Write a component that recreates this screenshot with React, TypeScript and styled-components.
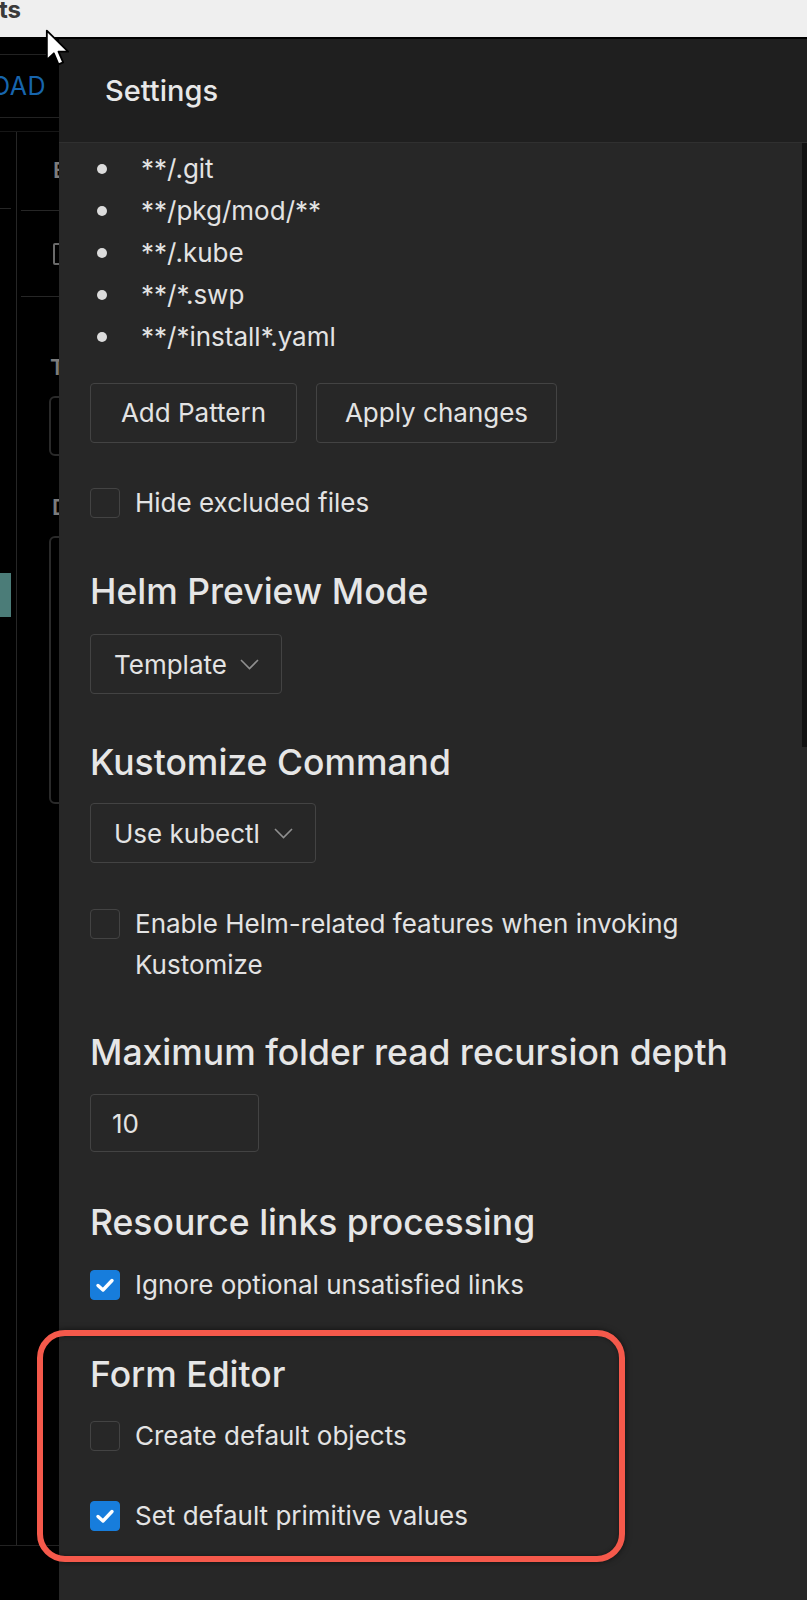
import React from 'react';
import styled, { createGlobalStyle } from 'styled-components';

const GlobalStyle = createGlobalStyle`
  html, body { margin: 0; padding: 0; background: #000; }
  body { font-family: Inter, "Noto Sans", "Liberation Sans", sans-serif; -webkit-font-smoothing: antialiased; }
  * { box-sizing: border-box; }
`;

const Page = styled.div`
  position: relative;
  width: 807px;
  height: 1600px;
  overflow: hidden;
  display: flex;
  flex-direction: column;
  background: #000;
`;

const TitleBar = styled.div`
  flex: none;
  height: 39px;
  background: #efefef;
  border-bottom: 2px solid #000;
  display: flex;
  align-items: flex-start;
`;

const TitleText = styled.span`
  font-family: Inter, "Liberation Sans", sans-serif;
  font-weight: 700;
  font-size: 24px;
  line-height: 24px;
  color: #3a3a3a;
  margin-top: -2px;
  margin-left: -1px;
`;

const Main = styled.div`
  flex: 1;
  display: flex;
  min-height: 0;
`;

/* ---------- background app, left strip ---------- */
const LeftPane = styled.div`
  flex: none;
  width: 59px;
  overflow: hidden;
  background: #000;
  display: flex;
  flex-direction: column;
`;

const TopStrip = styled.div`
  height: 16px;
  border-bottom: 1px solid #222;
`;

const ReloadRow = styled.div`
  height: 63px;
  border-bottom: 1px solid #222;
  display: flex;
  align-items: center;
  justify-content: flex-end;
  padding-right: 13px;
  overflow: hidden;
`;

const ReloadLabel = styled.span`
  white-space: nowrap;
  font-size: 25px;
  color: #1765ad;
  letter-spacing: 0.5px;
`;

const Spacer = styled.div`
  height: 14px;
  border-bottom: 1px solid #161616;
`;

const Columns = styled.div`
  height: 1414px;
  display: flex;
  border-bottom: 1px solid #222;
`;

const NarrowCol = styled.div`
  width: 17px;
  flex: none;
  border-right: 1px solid #262626;
  display: flex;
  flex-direction: column;
`;

const WideCol = styled.div`
  flex: 1;
  display: flex;
  flex-direction: column;
`;

const HLine = styled.div<{ $top: number; $left?: number; $w?: number }>`
  flex: none;
  height: 1px;
  margin-top: ${p => p.$top}px;
  margin-left: ${p => p.$left ?? 0}px;
  width: ${p => (p.$w ? `${p.$w}px` : 'auto')};
  background: #262626;
`;

const TealBlock = styled.div<{ $top: number }>`
  flex: none;
  margin-top: ${p => p.$top}px;
  width: 11px;
  height: 44px;
  background: #4b7c78;
`;

const GhostLabel = styled.span<{ $top: number; $left: number; $h: number }>`
  flex: none;
  display: block;
  white-space: nowrap;
  margin-top: ${p => p.$top}px;
  margin-left: ${p => p.$left}px;
  height: ${p => p.$h}px;
  line-height: ${p => p.$h}px;
  font-size: 22px;
  font-weight: 600;
  color: #7c7c7c;
`;

const GhostCheck = styled.div<{ $top: number; $left: number }>`
  flex: none;
  margin-top: ${p => p.$top}px;
  margin-left: ${p => p.$left}px;
  width: 20px;
  height: 22px;
  border: 2px solid #6a6a6a;
  border-radius: 2px;
`;

const GhostBox = styled.div<{ $top: number; $left: number; $h: number }>`
  flex: none;
  margin-top: ${p => p.$top}px;
  margin-left: ${p => p.$left}px;
  width: 60px;
  height: ${p => p.$h}px;
  border: 2px solid #2a2a2a;
  border-radius: 6px;
`;

/* ---------- drawer ---------- */
const Drawer = styled.div`
  flex: 1;
  display: flex;
  flex-direction: column;
  background: #272727;
  color: #e3e3e3;
`;

const DrawerHeader = styled.div`
  flex: none;
  height: 104px;
  background: #1f1f1f;
  border-bottom: 1px solid #303030;
  display: flex;
  align-items: center;
  padding-left: 46px;
`;

const DrawerTitle = styled.div`
  font-size: 29px;
  font-weight: 500;
  line-height: 40px;
  color: #e8e8e8;
`;

const DrawerBody = styled.div`
  flex: 1;
  display: flex;
`;

const Content = styled.div`
  flex: 1;
  padding: 5px 30px 0 31px;
  display: flex;
  flex-direction: column;
  align-items: flex-start;
`;

const ScrollRail = styled.div`
  flex: none;
  width: 5px;
`;

const ScrollThumb = styled.div`
  height: 604px;
  background: #121212;
`;

const PatternList = styled.ul`
  list-style: none;
  margin: 0;
  padding: 0;
`;

const PatternItem = styled.li`
  display: flex;
  align-items: center;
  height: 42px;
  font-size: 26px;
  line-height: 42px;
  color: #e3e3e3;
`;

const Dot = styled.span`
  flex: none;
  width: 10px;
  height: 10px;
  border-radius: 50%;
  background: #dcdcdc;
  margin-left: 7px;
  margin-right: 34px;
`;

const ButtonRow = styled.div`
  margin-top: 25px;
  display: flex;
  gap: 19px;
`;

const Button = styled.button<{ $w: number }>`
  width: ${p => p.$w}px;
  height: 60px;
  padding: 0;
  border: 1.8px solid #434343;
  border-radius: 4px;
  background: transparent;
  color: #e3e3e3;
  font-family: inherit;
  font-size: 26px;
  line-height: 1;
`;

const CheckRow = styled.label<{ $top: number }>`
  margin-top: ${p => p.$top}px;
  display: flex;
  align-items: flex-start;
  gap: 15px;
  max-width: 100%;
`;

const Box = styled.span<{ $checked?: boolean }>`
  flex: none;
  width: 30px;
  height: 30px;
  margin-top: 6px;
  border-radius: 4px;
  border: 1.8px solid ${p => (p.$checked ? '#177ddc' : '#434343')};
  background: ${p => (p.$checked ? '#177ddc' : 'transparent')};
  display: flex;
  align-items: center;
  justify-content: center;
`;

const CheckText = styled.span`
  font-size: 26px;
  line-height: 41px;
  color: #e3e3e3;
`;

const Heading = styled.h4<{ $top: number }>`
  margin: ${p => p.$top}px 0 0;
  font-size: 35.5px;
  font-weight: 500;
  line-height: 48px;
  color: #e6e6e6;
`;

const Select = styled.div<{ $top: number; $w: number }>`
  margin-top: ${p => p.$top}px;
  width: ${p => p.$w}px;
  height: 60px;
  border: 1.8px solid #434343;
  border-radius: 4px;
  display: flex;
  align-items: center;
  justify-content: space-between;
  padding: 0 22px 0 23px;
  font-size: 26px;
  color: #e3e3e3;
`;

const NumberInput = styled.div`
  margin-top: 17px;
  width: 169px;
  height: 58px;
  border: 1.8px solid #434343;
  border-radius: 4px;
  display: flex;
  align-items: center;
  padding-left: 21px;
  font-size: 26px;
  color: #e3e3e3;
`;

const Section = styled.div<{ $top: number }>`
  position: relative;
  margin-top: ${p => p.$top}px;
  display: flex;
  flex-direction: column;
  align-items: flex-start;
`;

const Annotation = styled.div`
  position: absolute;
  top: -21px;
  left: -53px;
  width: 588px;
  height: 232px;
  border: 6.5px solid #f5594b;
  border-radius: 28px;
  box-shadow: 0 0 6px rgba(0, 0, 0, 0.6), inset 0 0 4px rgba(0, 0, 0, 0.4);
  pointer-events: none;
`;

const Cursor = styled.svg`
  position: absolute;
  left: 45px;
  top: 29px;
`;

const Check = () => (
  <svg width="22" height="22" viewBox="0 0 22 22">
    <polyline points="4,11.5 9,16 18,6.5" fill="none" stroke="#fff" strokeWidth="3.4" strokeLinecap="round" strokeLinejoin="round" />
  </svg>
);

const Chevron = () => (
  <svg width="19" height="11" viewBox="0 0 19 11">
    <polyline points="1,1 9.5,9.5 18,1" fill="none" stroke="#8f8f8f" strokeWidth="1.6" />
  </svg>
);

const patterns = ['**/.git', '**/pkg/mod/**', '**/.kube', '**/*.swp', '**/*install*.yaml'];

export default function App() {
  return (
    <>
      <GlobalStyle />
      <Page>
        <TitleBar>
          <TitleText>ts</TitleText>
        </TitleBar>
        <Main>
          <LeftPane>
            <TopStrip />
            <ReloadRow>
              <ReloadLabel>RELOAD</ReloadLabel>
            </ReloadRow>
            <Spacer />
            <Columns>
              <NarrowCol>
                <HLine $top={76} $w={11} />
                <TealBlock $top={364} />
              </NarrowCol>
              <WideCol>
                <GhostLabel $top={28} $left={36} $h={20}>Edit</GhostLabel>
                <HLine $top={30} $left={4} />
                <GhostCheck $top={32} $left={36} />
                <HLine $top={31} $left={4} />
                <GhostLabel $top={61} $left={33} $h={18}>Title</GhostLabel>
                <GhostBox $top={20} $left={32} $h={60} />
                <GhostLabel $top={42} $left={35} $h={19}>Desc</GhostLabel>
                <GhostBox $top={19} $left={32} $h={268} />
              </WideCol>
            </Columns>
          </LeftPane>
          <Drawer>
            <DrawerHeader>
              <DrawerTitle>Settings</DrawerTitle>
            </DrawerHeader>
            <DrawerBody>
              <Content>
                <PatternList>
                  {patterns.map(p => (
                    <PatternItem key={p}>
                      <Dot />
                      {p}
                    </PatternItem>
                  ))}
                </PatternList>
                <ButtonRow>
                  <Button $w={207}>Add Pattern</Button>
                  <Button $w={241}>Apply changes</Button>
                </ButtonRow>
                <CheckRow $top={39}>
                  <Box />
                  <CheckText>Hide excluded files</CheckText>
                </CheckRow>

                <Heading $top={45}>Helm Preview Mode</Heading>
                <Select $top={18} $w={192}>
                  <span>Template</span>
                  <Chevron />
                </Select>

                <Heading $top={45}>Kustomize Command</Heading>
                <Select $top={16} $w={226}>
                  <span>Use kubectl</span>
                  <Chevron />
                </Select>

                <CheckRow $top={40}>
                  <Box />
                  <CheckText>Enable Helm-related features when invoking Kustomize</CheckText>
                </CheckRow>

                <Heading $top={44}>Maximum folder read recursion depth</Heading>
                <NumberInput>10</NumberInput>

                <Heading $top={47}>Resource links processing</Heading>
                <CheckRow $top={17}>
                  <Box $checked>
                    <Check />
                  </Box>
                  <CheckText>Ignore optional unsatisfied links</CheckText>
                </CheckRow>

                <Section $top={46}>
                  <Annotation />
                  <Heading $top={0}>Form Editor</Heading>
                  <CheckRow $top={16}>
                    <Box />
                    <CheckText>Create default objects</CheckText>
                  </CheckRow>
                  <CheckRow $top={39}>
                    <Box $checked>
                      <Check />
                    </Box>
                    <CheckText>Set default primitive values</CheckText>
                  </CheckRow>
                </Section>
              </Content>
              <ScrollRail>
                <ScrollThumb />
              </ScrollRail>
            </DrawerBody>
          </Drawer>
        </Main>
        <Cursor width="27" height="40" viewBox="0 0 16 24">
          <path d="M1 1 L1 18.5 L5.2 14.6 L8 21.2 L10.8 20 L8 13.6 L13.8 13.6 Z" fill="#fff" stroke="#000" strokeWidth="1.1" strokeLinejoin="round" />
        </Cursor>
      </Page>
    </>
  );
}
